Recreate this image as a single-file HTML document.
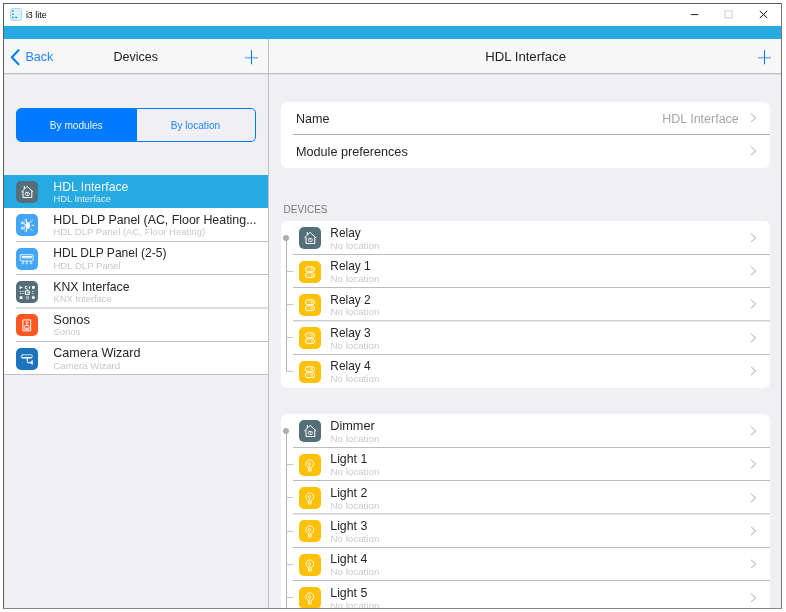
<!DOCTYPE html>
<html lang="en"><head><meta charset="utf-8"><title>i3 lite</title>
<style>
html,body{margin:0;padding:0}
body{width:786px;height:612px;background:#fff;overflow:hidden;position:relative;font-family:"Liberation Sans",sans-serif;-webkit-font-smoothing:antialiased}
#clip{position:absolute;left:4px;top:4px;width:777px;height:604px;overflow:hidden;background:#efeff4}
#c{position:absolute;left:-4px;top:-4px;width:786px;height:612px;will-change:transform}
#frame{position:absolute;left:3px;top:3px;width:777px;height:604px;border:1px solid #666;border-color:#5c5c5c #777 #8a8a8a #5c5c5c;pointer-events:none}
.b{position:absolute}
.t{position:absolute;white-space:nowrap}
.ic{position:absolute;width:22px;height:22px;border-radius:5px}
.chev{position:absolute;width:8px;height:12px}
.sep{position:absolute;height:1px;background:#c9c8cd}
.card{position:absolute;background:#fff;border-radius:6px}
</style></head><body>
<div id="clip"><div id="c">
<div class="b" style="left:4px;top:4px;width:777px;height:22px;background:#fff"></div>
<svg class="b" style="left:9px;top:7px;width:14px;height:15px" viewBox="0 0 14 15"><rect x="1.5" y="1.5" width="11" height="12" rx="2.2" fill="#e6f4fb" stroke="#a5d8f1" stroke-width="1"/><g fill="#c4e6f6"><circle cx="7.1" cy="4" r=".9"/><circle cx="10.1" cy="4" r=".9"/><circle cx="7.1" cy="7.3" r=".9"/><circle cx="10.1" cy="7.3" r=".9"/><circle cx="10.1" cy="10.6" r=".9"/></g><g fill="#2aa3dc"><circle cx="3.9" cy="4" r="1"/><circle cx="3.9" cy="7.3" r="1"/><circle cx="3.9" cy="10.6" r="1"/><circle cx="7.1" cy="10.6" r="1"/></g></svg>
<div class="t" style="left:25.90px;top:10px;font-size:8.9px;line-height:10px;color:#000;">i3 lite</div>
<svg class="b" style="left:680px;top:4px;width:100px;height:22px" viewBox="0 0 100 22"><path d="M10.8 10.6 h7.4" stroke="#222" stroke-width="1" fill="none"/><rect x="45" y="6.8" width="7" height="7" fill="none" stroke="#cfcfcf" stroke-width="1"/><path d="M79.8 7 L87.2 14 M87.2 7 L79.8 14" stroke="#111" stroke-width="1" fill="none"/></svg>
<div class="b" style="left:4px;top:26px;width:777px;height:13px;background:#27a9e1"></div>
<div class="b" style="left:4px;top:39px;width:777px;height:34px;background:#f7f7f7"></div>
<div class="b" style="left:4px;top:73px;width:777px;height:1px;background:#c3c3c3"></div>
<div class="b" style="left:4px;top:74px;width:777px;height:1px;background:#dedee1"></div>
<div class="b" style="left:268px;top:39px;width:1px;height:570px;background:#c1c1c1"></div>
<svg class="b" style="left:8px;top:47px;width:14px;height:20px" viewBox="0 0 14 20"><path d="M10.6 3.2 L3.8 10.2 L10.6 17.2" fill="none" stroke="#007aff" stroke-width="2" stroke-linecap="round" stroke-linejoin="round"/></svg>
<div class="t" style="left:25.40px;top:50px;font-size:12.6px;line-height:14px;color:#2486ff;">Back</div>
<div class="t" style="left:-14.20px;width:300px;text-align:center;top:50px;font-size:12.5px;line-height:14px;color:#222;">Devices</div>
<div class="t" style="left:375.60px;width:300px;text-align:center;top:49px;font-size:13.2px;line-height:15px;color:#222;">HDL Interface</div>
<svg class="b" style="left:243px;top:49px;width:17px;height:17px" viewBox="0 0 17 17"><path d="M1.9 8.75 H15" stroke="#86bcff" stroke-width="1.7" fill="none"/><path d="M8.5 1 V15.3" stroke="#007aff" stroke-width="1" fill="none"/></svg>
<svg class="b" style="left:756px;top:49px;width:17px;height:17px" viewBox="0 0 17 17"><path d="M1.9 8.75 H15" stroke="#86bcff" stroke-width="1.7" fill="none"/><path d="M8.5 1 V15.3" stroke="#007aff" stroke-width="1" fill="none"/></svg>
<div class="b" style="left:16px;top:108px;width:238px;height:32px;border:1px solid #007aff;border-radius:5px;overflow:hidden"><div style="position:absolute;left:0;top:0;width:120px;height:32px;background:#007aff"></div></div>
<div class="t" style="left:-73.80px;width:300px;text-align:center;top:120px;font-size:10.15px;line-height:11px;color:#eaf3ff;">By modules</div>
<div class="t" style="left:45.40px;width:300px;text-align:center;top:120px;font-size:10.15px;line-height:11px;color:#2486ff;">By location</div>
<div class="b" style="left:4px;top:175px;width:264px;height:199px;background:#fff"></div>
<div class="b" style="left:4px;top:374px;width:264px;height:1px;background:#c4c4c6"></div>
<div class="b" style="left:4px;top:175px;width:264px;height:33px;background:#27a9e1"></div>
<svg class="ic" style="left:16px;top:181px;background:#546e7a" viewBox="0 0 22 22"><g fill="none" stroke="#fff" stroke-width="1" stroke-linecap="round" stroke-linejoin="round"><path d="M5.7 10.7 L11.1 5.4 L16.9 10.7"/><path d="M7 10.5 V16.5 H15.8 V10.5"/><path d="M8.3 7.5 V5.6" stroke-width="1.1"/><rect x="9.4" y="11.4" width="3.9" height="3.1" rx=".9" stroke-width=".8"/><path d="M11 12.6 h1 v.8" stroke-width=".7"/></g></svg>
<div class="t" style="left:53.30px;top:180px;font-size:12.25px;line-height:14px;color:#f3faff;">HDL Interface</div>
<div class="t" style="left:53.40px;top:193px;font-size:9.4px;line-height:11px;color:#dcf1fb;">HDL Interface</div>
<svg class="ic" style="left:16px;top:214px;background:#42a5f5" viewBox="0 0 22 22"><g fill="none" stroke="#fff" stroke-width=".9" stroke-linecap="round"><path d="M10.7 8.1 A3.4 3.4 0 0 1 10.7 14.9 Z" fill="#fff" stroke="none"/><path d="M10.4 4.9 V17.9 M10.4 11.5 L5 8.3 M10.4 11.5 L5 14.8" stroke-width=".9"/><path d="M5.1 10 l1.9 -.6 l-.5 -1.9 M5.1 13.1 l1.9 .6 l-.5 1.9 M8.6 5.6 l1.8 1.5 M8.6 17.2 l1.8 -1.5 M8 7.4 l.3 2.4 M8 15.6 l.3 -2.4" stroke-width=".75" opacity=".9"/><path d="M13.9 8.6 L16.5 6 M16 11.3 h1.8" stroke-width="1"/><path d="M13.9 14.8 L16.6 16.5" stroke-width=".8" opacity=".8"/></g></svg>
<div class="t" style="left:53.30px;top:213px;font-size:12.4px;line-height:14px;color:#262626;">HDL DLP Panel (AC, Floor Heating...</div>
<div class="t" style="left:53.40px;top:226px;font-size:9.55px;line-height:11px;color:#c8c8c9;">HDL DLP Panel (AC, Floor Heating)</div>
<div class="sep" style="left:16px;top:241px;width:252px;background:#c2c2c4"></div>
<svg class="ic" style="left:16px;top:248px;background:#42a5f5" viewBox="0 0 22 22"><g fill="none" stroke="#fff" stroke-width=".9" stroke-linecap="round" stroke-linejoin="round"><rect x="4.3" y="6.7" width="12.9" height="6.3" rx=".7" opacity=".92"/><rect x="5.8" y="8" width="10.4" height="1.7" fill="#fff" stroke="none"/><path d="M6.6 10.4 h8.8" stroke-width=".6" stroke-dasharray=".8 1.1" opacity=".8"/><path d="M7.1 13.4 v1.2 M11 13.4 v1.2 M14.9 13.4 v1.2" stroke-width=".9"/><path d="M7.6 15.2 q-.3 1.2 -1.5 .6 M11.4 15.2 q-.3 1.2 -1.5 .6 M14.4 15.2 q.3 1.2 1.6 .6" stroke-width=".9"/></g></svg>
<div class="t" style="left:53.30px;top:246px;font-size:12.05px;line-height:14px;color:#262626;">HDL DLP Panel (2-5)</div>
<div class="t" style="left:53.40px;top:260px;font-size:9.6px;line-height:11px;color:#c8c8c9;">HDL DLP Panel</div>
<div class="sep" style="left:16px;top:274px;width:252px;background:#c2c2c4"></div>
<svg class="ic" style="left:16px;top:281px;background:#546e7a" viewBox="0 0 22 22"><g fill="#fff" stroke="none"><path d="M3.7 4.9 L6.8 6.4 L3.7 7.9 Z"/><path d="M8.9 5.1 h2.1 v.8 h-1.3 v1.1 h1.3 v.8 h-2.1 Z"/><rect x="12.8" y="5.1" width="1" height="2.7"/><rect x="15.9" y="5.1" width="2.9" height="2.6" rx=".7"/><rect x="17" y="7.6" width=".7" height=".8" opacity=".7"/><rect x="3.7" y="15.2" width="2.8" height="2.8" rx=".5"/><circle cx="17.3" cy="16.6" r="1.5"/><rect x="17" y="14.4" width=".7" height=".9" opacity=".8"/></g><g fill="none" stroke="#fff"><path d="M3.7 10.5 h4.4 M3.7 12.5 h4.4 M15.9 10.5 h2.2 M15.9 12.5 h2.2" stroke-width=".8" stroke-dasharray="1.3 .5" opacity=".85"/><rect x="9.4" y="9.9" width="3.7" height="3.5" stroke-width="1"/><path d="M13.4 11 v1.4" stroke-width="1"/><path d="M11.25 7.9 v1.6" stroke-width=".8"/><rect x="10.8" y="11.2" width=".9" height=".9" fill="#fff" stroke="none"/><circle cx="11.5" cy="16.7" r="1.4" stroke-width=".8" opacity=".75"/><path d="M10.6 17.5 l1.8 -1.6" stroke-width=".6" opacity=".7"/></g></svg>
<div class="t" style="left:53.30px;top:280px;font-size:12.25px;line-height:14px;color:#262626;">KNX Interface</div>
<div class="t" style="left:53.40px;top:293px;font-size:9.4px;line-height:11px;color:#c8c8c9;">KNX Interface</div>
<div class="sep" style="left:16px;top:307px;width:252px;height:2px;background:#dededf"></div>
<svg class="ic" style="left:16px;top:314px;background:#ff5722" viewBox="0 0 22 22"><g fill="none" stroke="#fff" stroke-width="1" stroke-linejoin="round"><rect x="6.9" y="5.9" width="7.8" height="10.9"/><circle cx="11" cy="8.6" r="1" stroke-width=".8"/><circle cx="10.8" cy="13.5" r="2.4" stroke-width=".9"/><ellipse cx="10.8" cy="14.2" rx="1.2" ry=".8" fill="#fff" stroke="none"/><path d="M10 11.3 h1.8" stroke-width=".8"/></g></svg>
<div class="t" style="left:53.30px;top:312px;font-size:12.9px;line-height:15px;color:#262626;">Sonos</div>
<div class="t" style="left:53.40px;top:326px;font-size:9.5px;line-height:11px;color:#c8c8c9;">Sonos</div>
<div class="sep" style="left:16px;top:341px;width:252px;background:#c2c2c4"></div>
<svg class="ic" style="left:16px;top:348px;background:#1c74bc" viewBox="0 0 22 22"><g fill="none" stroke="#fff" stroke-width="1" stroke-linecap="round" stroke-linejoin="round"><rect x="5.1" y="6.8" width="11.3" height="3.1" rx="1.5" stroke-width=".9" opacity=".9"/><path d="M6.2 9.7 h9" stroke-width="1.3"/><path d="M11.4 10.4 v4.4 h2.8" stroke-width="1"/><path d="M10.6 10.6 l.8 1.6" stroke-width=".6" opacity=".7"/><path d="M16.5 12.5 V16.5 L14 14.7 Z" fill="#fff" stroke-width=".5"/></g></svg>
<div class="t" style="left:53.30px;top:346px;font-size:12.55px;line-height:14px;color:#262626;">Camera Wizard</div>
<div class="t" style="left:53.40px;top:360px;font-size:9.6px;line-height:11px;color:#c8c8c9;">Camera Wizard</div>
<div class="card" style="left:281px;top:101.5px;width:489px;height:66.5px"></div>
<div class="sep" style="left:293px;top:134px;width:477px;background:#b0b0b2"></div>
<div class="t" style="left:296.00px;top:112px;font-size:12.55px;line-height:14px;color:#262626;">Name</div>
<div class="t" style="left:296.00px;top:145px;font-size:12.65px;line-height:14px;color:#262626;">Module preferences</div>
<div class="t" style="right:47.20px;top:112px;font-size:12.5px;line-height:14px;color:#a6a6a8;">HDL Interface</div>
<svg class="chev" style="left:749.8px;top:111.8px" viewBox="0 0 8 12"><path d="M1.4 2.1 L5.7 5.9 L1.4 9.7" fill="none" stroke="#c2c2c6" stroke-width="1.15" stroke-linecap="round" stroke-linejoin="round"/></svg>
<svg class="chev" style="left:749.8px;top:145.1px" viewBox="0 0 8 12"><path d="M1.4 2.1 L5.7 5.9 L1.4 9.7" fill="none" stroke="#c2c2c6" stroke-width="1.15" stroke-linecap="round" stroke-linejoin="round"/></svg>
<div class="t" style="left:283.60px;top:204px;font-size:10px;line-height:11px;color:#77777c;">DEVICES</div>
<div class="card" style="left:281px;top:221px;width:489px;height:166.7px"></div>
<div class="b" style="left:286px;top:237.8px;width:1px;height:134.2px;background:#b0b0b0"></div>
<div class="b" style="left:283px;top:234.8px;width:6px;height:6px;border-radius:3px;background:#adadad"></div>
<svg class="ic" style="left:299px;top:227px;background:#546e7a" viewBox="0 0 22 22"><g fill="none" stroke="#fff" stroke-width="1" stroke-linecap="round" stroke-linejoin="round"><path d="M5.7 10.7 L11.1 5.4 L16.9 10.7"/><path d="M7 10.5 V16.5 H15.8 V10.5"/><path d="M8.3 7.5 V5.6" stroke-width="1.1"/><rect x="9.4" y="11.4" width="3.9" height="3.1" rx=".9" stroke-width=".8"/><path d="M11 12.6 h1 v.8" stroke-width=".7"/></g></svg>
<div class="t" style="left:330.30px;top:226px;font-size:11.9px;line-height:14px;color:#262626;">Relay</div>
<div class="t" style="left:330.40px;top:240px;font-size:9.8px;line-height:11px;color:#cbcbcc;">No location</div>
<svg class="chev" style="left:749.8px;top:231.6px" viewBox="0 0 8 12"><path d="M1.4 2.1 L5.7 5.9 L1.4 9.7" fill="none" stroke="#c2c2c6" stroke-width="1.15" stroke-linecap="round" stroke-linejoin="round"/></svg>
<div class="sep" style="left:293px;top:254px;width:477px;background:#bcbcbe"></div>
<div class="b" style="left:286px;top:271px;width:7px;height:1px;background:#c4c4c4"></div>
<svg class="ic" style="left:299px;top:261px;background:#ffc107" viewBox="0 0 22 22"><g fill="none" stroke="#fff" stroke-width="1"><rect x="6.4" y="5.9" width="9.2" height="4.8" rx="2.4"/><rect x="6.4" y="11.8" width="9.2" height="4.8" rx="2.4"/><circle cx="12.6" cy="8.2" r=".9" stroke-width=".7"/><circle cx="12.8" cy="14.4" r=".9" stroke-width=".7"/><path d="M8 8.3 h2.6 M8 14.2 h2.6" stroke-width=".5" opacity=".7"/></g></svg>
<div class="t" style="left:330.30px;top:259px;font-size:11.9px;line-height:14px;color:#262626;">Relay 1</div>
<div class="t" style="left:330.40px;top:273px;font-size:9.8px;line-height:11px;color:#cbcbcc;">No location</div>
<svg class="chev" style="left:749.8px;top:264.9px" viewBox="0 0 8 12"><path d="M1.4 2.1 L5.7 5.9 L1.4 9.7" fill="none" stroke="#c2c2c6" stroke-width="1.15" stroke-linecap="round" stroke-linejoin="round"/></svg>
<div class="sep" style="left:293px;top:287px;width:477px;background:#bcbcbe"></div>
<div class="b" style="left:286px;top:304px;width:7px;height:1px;background:#c4c4c4"></div>
<svg class="ic" style="left:299px;top:294px;background:#ffc107" viewBox="0 0 22 22"><g fill="none" stroke="#fff" stroke-width="1"><rect x="6.4" y="5.9" width="9.2" height="4.8" rx="2.4"/><rect x="6.4" y="11.8" width="9.2" height="4.8" rx="2.4"/><circle cx="12.6" cy="8.2" r=".9" stroke-width=".7"/><circle cx="12.8" cy="14.4" r=".9" stroke-width=".7"/><path d="M8 8.3 h2.6 M8 14.2 h2.6" stroke-width=".5" opacity=".7"/></g></svg>
<div class="t" style="left:330.30px;top:293px;font-size:11.9px;line-height:14px;color:#262626;">Relay 2</div>
<div class="t" style="left:330.40px;top:306px;font-size:9.8px;line-height:11px;color:#cbcbcc;">No location</div>
<svg class="chev" style="left:749.8px;top:298.3px" viewBox="0 0 8 12"><path d="M1.4 2.1 L5.7 5.9 L1.4 9.7" fill="none" stroke="#c2c2c6" stroke-width="1.15" stroke-linecap="round" stroke-linejoin="round"/></svg>
<div class="sep" style="left:293px;top:320px;width:477px;background:#cfcfd1"></div><div class="sep" style="left:293px;top:321px;width:477px;background:#e9e9ea"></div>
<div class="b" style="left:286px;top:337px;width:7px;height:1px;background:#c4c4c4"></div>
<svg class="ic" style="left:299px;top:327px;background:#ffc107" viewBox="0 0 22 22"><g fill="none" stroke="#fff" stroke-width="1"><rect x="6.4" y="5.9" width="9.2" height="4.8" rx="2.4"/><rect x="6.4" y="11.8" width="9.2" height="4.8" rx="2.4"/><circle cx="12.6" cy="8.2" r=".9" stroke-width=".7"/><circle cx="12.8" cy="14.4" r=".9" stroke-width=".7"/><path d="M8 8.3 h2.6 M8 14.2 h2.6" stroke-width=".5" opacity=".7"/></g></svg>
<div class="t" style="left:330.30px;top:326px;font-size:11.9px;line-height:14px;color:#262626;">Relay 3</div>
<div class="t" style="left:330.40px;top:340px;font-size:9.8px;line-height:11px;color:#cbcbcc;">No location</div>
<svg class="chev" style="left:749.8px;top:331.6px" viewBox="0 0 8 12"><path d="M1.4 2.1 L5.7 5.9 L1.4 9.7" fill="none" stroke="#c2c2c6" stroke-width="1.15" stroke-linecap="round" stroke-linejoin="round"/></svg>
<div class="sep" style="left:293px;top:354px;width:477px;background:#bcbcbe"></div>
<div class="b" style="left:286px;top:371px;width:7px;height:1px;background:#c4c4c4"></div>
<svg class="ic" style="left:299px;top:361px;background:#ffc107" viewBox="0 0 22 22"><g fill="none" stroke="#fff" stroke-width="1"><rect x="6.4" y="5.9" width="9.2" height="4.8" rx="2.4"/><rect x="6.4" y="11.8" width="9.2" height="4.8" rx="2.4"/><circle cx="12.6" cy="8.2" r=".9" stroke-width=".7"/><circle cx="12.8" cy="14.4" r=".9" stroke-width=".7"/><path d="M8 8.3 h2.6 M8 14.2 h2.6" stroke-width=".5" opacity=".7"/></g></svg>
<div class="t" style="left:330.30px;top:359px;font-size:11.9px;line-height:14px;color:#262626;">Relay 4</div>
<div class="t" style="left:330.40px;top:373px;font-size:9.8px;line-height:11px;color:#cbcbcc;">No location</div>
<svg class="chev" style="left:749.8px;top:364.9px" viewBox="0 0 8 12"><path d="M1.4 2.1 L5.7 5.9 L1.4 9.7" fill="none" stroke="#c2c2c6" stroke-width="1.15" stroke-linecap="round" stroke-linejoin="round"/></svg>
<div class="card" style="left:281px;top:414.2px;width:489px;height:233.3px"></div>
<div class="b" style="left:286px;top:431.0px;width:1px;height:201.0px;background:#b0b0b0"></div>
<div class="b" style="left:283px;top:428.0px;width:6px;height:6px;border-radius:3px;background:#adadad"></div>
<svg class="ic" style="left:299px;top:420px;background:#546e7a" viewBox="0 0 22 22"><g fill="none" stroke="#fff" stroke-width="1" stroke-linecap="round" stroke-linejoin="round"><path d="M5.7 10.7 L11.1 5.4 L16.9 10.7"/><path d="M7 10.5 V16.5 H15.8 V10.5"/><path d="M8.3 7.5 V5.6" stroke-width="1.1"/><rect x="9.4" y="11.4" width="3.9" height="3.1" rx=".9" stroke-width=".8"/><path d="M11 12.6 h1 v.8" stroke-width=".7"/></g></svg>
<div class="t" style="left:330.30px;top:419px;font-size:12.7px;line-height:14px;color:#262626;">Dimmer</div>
<div class="t" style="left:330.40px;top:433px;font-size:9.8px;line-height:11px;color:#cbcbcc;">No location</div>
<svg class="chev" style="left:749.8px;top:424.8px" viewBox="0 0 8 12"><path d="M1.4 2.1 L5.7 5.9 L1.4 9.7" fill="none" stroke="#c2c2c6" stroke-width="1.15" stroke-linecap="round" stroke-linejoin="round"/></svg>
<div class="sep" style="left:293px;top:447px;width:477px;background:#bcbcbe"></div>
<div class="b" style="left:286px;top:464px;width:7px;height:1px;background:#c4c4c4"></div>
<svg class="ic" style="left:299px;top:454px;background:#ffc107" viewBox="0 0 22 22"><g fill="none" stroke="#fff" stroke-width=".9" stroke-linejoin="round"><path d="M9.3 13.4 A3.9 3.9 0 1 1 12.3 13.4"/><path d="M9.5 13.4 V17 H12.1 V13.4" /><circle cx="10.5" cy="9.8" r="1.2" stroke-width=".8"/><path d="M10.6 11 L10.8 14.6" stroke-width=".7"/><circle cx="10.7" cy="15.6" r=".6" fill="#fff" stroke="none"/></g></svg>
<div class="t" style="left:330.30px;top:452px;font-size:12.3px;line-height:14px;color:#262626;">Light 1</div>
<div class="t" style="left:330.40px;top:466px;font-size:9.8px;line-height:11px;color:#cbcbcc;">No location</div>
<svg class="chev" style="left:749.8px;top:458.1px" viewBox="0 0 8 12"><path d="M1.4 2.1 L5.7 5.9 L1.4 9.7" fill="none" stroke="#c2c2c6" stroke-width="1.15" stroke-linecap="round" stroke-linejoin="round"/></svg>
<div class="sep" style="left:293px;top:480px;width:477px;background:#bcbcbe"></div>
<div class="b" style="left:286px;top:497px;width:7px;height:1px;background:#c4c4c4"></div>
<svg class="ic" style="left:299px;top:487px;background:#ffc107" viewBox="0 0 22 22"><g fill="none" stroke="#fff" stroke-width=".9" stroke-linejoin="round"><path d="M9.3 13.4 A3.9 3.9 0 1 1 12.3 13.4"/><path d="M9.5 13.4 V17 H12.1 V13.4" /><circle cx="10.5" cy="9.8" r="1.2" stroke-width=".8"/><path d="M10.6 11 L10.8 14.6" stroke-width=".7"/><circle cx="10.7" cy="15.6" r=".6" fill="#fff" stroke="none"/></g></svg>
<div class="t" style="left:330.30px;top:486px;font-size:12.3px;line-height:14px;color:#262626;">Light 2</div>
<div class="t" style="left:330.40px;top:500px;font-size:9.8px;line-height:11px;color:#cbcbcc;">No location</div>
<svg class="chev" style="left:749.8px;top:491.5px" viewBox="0 0 8 12"><path d="M1.4 2.1 L5.7 5.9 L1.4 9.7" fill="none" stroke="#c2c2c6" stroke-width="1.15" stroke-linecap="round" stroke-linejoin="round"/></svg>
<div class="sep" style="left:293px;top:513px;width:477px;background:#cfcfd1"></div><div class="sep" style="left:293px;top:514px;width:477px;background:#e9e9ea"></div>
<div class="b" style="left:286px;top:531px;width:7px;height:1px;background:#c4c4c4"></div>
<svg class="ic" style="left:299px;top:520px;background:#ffc107" viewBox="0 0 22 22"><g fill="none" stroke="#fff" stroke-width=".9" stroke-linejoin="round"><path d="M9.3 13.4 A3.9 3.9 0 1 1 12.3 13.4"/><path d="M9.5 13.4 V17 H12.1 V13.4" /><circle cx="10.5" cy="9.8" r="1.2" stroke-width=".8"/><path d="M10.6 11 L10.8 14.6" stroke-width=".7"/><circle cx="10.7" cy="15.6" r=".6" fill="#fff" stroke="none"/></g></svg>
<div class="t" style="left:330.30px;top:519px;font-size:12.3px;line-height:14px;color:#262626;">Light 3</div>
<div class="t" style="left:330.40px;top:533px;font-size:9.8px;line-height:11px;color:#cbcbcc;">No location</div>
<svg class="chev" style="left:749.8px;top:524.8px" viewBox="0 0 8 12"><path d="M1.4 2.1 L5.7 5.9 L1.4 9.7" fill="none" stroke="#c2c2c6" stroke-width="1.15" stroke-linecap="round" stroke-linejoin="round"/></svg>
<div class="sep" style="left:293px;top:547px;width:477px;background:#bcbcbe"></div>
<div class="b" style="left:286px;top:564px;width:7px;height:1px;background:#c4c4c4"></div>
<svg class="ic" style="left:299px;top:554px;background:#ffc107" viewBox="0 0 22 22"><g fill="none" stroke="#fff" stroke-width=".9" stroke-linejoin="round"><path d="M9.3 13.4 A3.9 3.9 0 1 1 12.3 13.4"/><path d="M9.5 13.4 V17 H12.1 V13.4" /><circle cx="10.5" cy="9.8" r="1.2" stroke-width=".8"/><path d="M10.6 11 L10.8 14.6" stroke-width=".7"/><circle cx="10.7" cy="15.6" r=".6" fill="#fff" stroke="none"/></g></svg>
<div class="t" style="left:330.30px;top:552px;font-size:12.3px;line-height:14px;color:#262626;">Light 4</div>
<div class="t" style="left:330.40px;top:566px;font-size:9.8px;line-height:11px;color:#cbcbcc;">No location</div>
<svg class="chev" style="left:749.8px;top:558.1px" viewBox="0 0 8 12"><path d="M1.4 2.1 L5.7 5.9 L1.4 9.7" fill="none" stroke="#c2c2c6" stroke-width="1.15" stroke-linecap="round" stroke-linejoin="round"/></svg>
<div class="sep" style="left:293px;top:580px;width:477px;background:#bcbcbe"></div>
<div class="b" style="left:286px;top:597px;width:7px;height:1px;background:#c4c4c4"></div>
<svg class="ic" style="left:299px;top:587px;background:#ffc107" viewBox="0 0 22 22"><g fill="none" stroke="#fff" stroke-width=".9" stroke-linejoin="round"><path d="M9.3 13.4 A3.9 3.9 0 1 1 12.3 13.4"/><path d="M9.5 13.4 V17 H12.1 V13.4" /><circle cx="10.5" cy="9.8" r="1.2" stroke-width=".8"/><path d="M10.6 11 L10.8 14.6" stroke-width=".7"/><circle cx="10.7" cy="15.6" r=".6" fill="#fff" stroke="none"/></g></svg>
<div class="t" style="left:330.30px;top:586px;font-size:12.3px;line-height:14px;color:#262626;">Light 5</div>
<div class="t" style="left:330.40px;top:600px;font-size:9.8px;line-height:11px;color:#cbcbcc;">No location</div>
<svg class="chev" style="left:749.8px;top:591.5px" viewBox="0 0 8 12"><path d="M1.4 2.1 L5.7 5.9 L1.4 9.7" fill="none" stroke="#c2c2c6" stroke-width="1.15" stroke-linecap="round" stroke-linejoin="round"/></svg>
</div></div><div id="frame"></div></body></html>
